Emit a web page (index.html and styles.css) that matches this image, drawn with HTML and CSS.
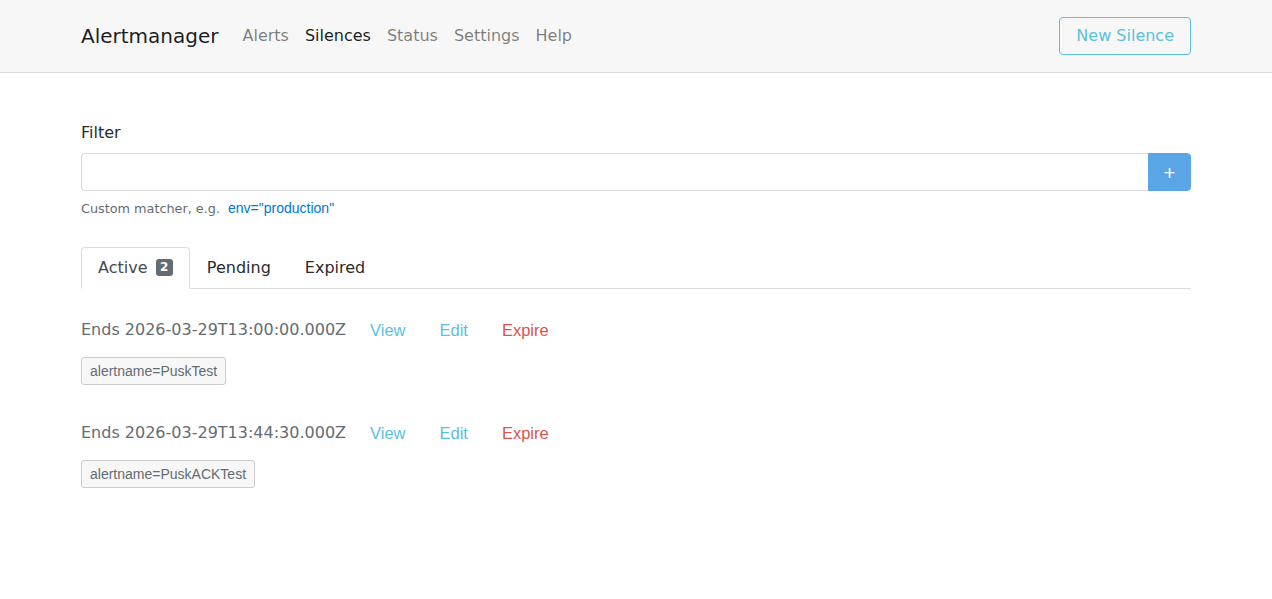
FILE: index.html
```html
<!DOCTYPE html>
<html>
<head>
  <title>Alertmanager</title>
  <link rel="stylesheet" href="styles.css">
</head>
<body>
  <nav class="navbar">
    <div class="container nav-inner">
      <a class="brand" href="#">Alertmanager</a>
      <ul class="nav-links">
        <li><a href="#">Alerts</a></li>
        <li><a href="#" class="active">Silences</a></li>
        <li><a href="#">Status</a></li>
        <li><a href="#">Settings</a></li>
        <li><a href="#">Help</a></li>
      </ul>
      <a class="btn-new" href="#">New Silence</a>
    </div>
  </nav>

  <div class="container main">
    <div class="filter">
      <label class="filter-label">Filter</label>
      <div class="input-group">
        <input class="filter-input" type="text">
        <button class="btn-add" disabled>+</button>
      </div>
      <small class="form-text">Custom matcher, e.g. <a class="example" href="#">env="production"</a></small>
    </div>

    <ul class="tabs">
      <li class="tab active">Active<span class="count">2</span></li>
      <li class="tab">Pending</li>
      <li class="tab">Expired</li>
    </ul>

    <div class="silence">
      <div class="silence-head">
        <span class="ends">Ends 2026-03-29T13:00:00.000Z</span>
        <a class="action info" href="#">View</a>
        <a class="action info" href="#">Edit</a>
        <a class="action danger" href="#">Expire</a>
      </div>
      <div class="matchers">
        <span class="matcher">alertname=PuskTest</span>
      </div>
    </div>

    <div class="silence">
      <div class="silence-head">
        <span class="ends">Ends 2026-03-29T13:44:30.000Z</span>
        <a class="action info" href="#">View</a>
        <a class="action info" href="#">Edit</a>
        <a class="action danger" href="#">Expire</a>
      </div>
      <div class="matchers">
        <span class="matcher">alertname=PuskACKTest</span>
      </div>
    </div>
  </div>
</body>
</html>
```

FILE: styles.css
```css
body {
  margin: 0;
  font-family: "DejaVu Sans", sans-serif;
  font-size: 16px;
  line-height: 1.5;
  color: #292b2c;
  background: #fff;
}

a {
  text-decoration: none;
}

.container {
  width: 1110px;
  margin: 0 auto;
}

.navbar {
  background-color: #f7f7f7;
  border-bottom: 1px solid #dcdcdc;
  padding: 17px 0;
}

.nav-inner {
  display: flex;
  align-items: center;
  height: 38px;
}

.brand {
  font-size: 20px;
  color: rgba(0, 0, 0, .9);
  margin-right: 16px;
}

.nav-links {
  display: flex;
  list-style: none;
  margin: 0;
  padding: 0;
  flex: 1;
}

.nav-links a {
  display: block;
  padding: 0 8px;
  color: rgba(0, 0, 0, .5);
}

.nav-links a.active {
  color: rgba(0, 0, 0, .9);
}

.btn-new {
  display: block;
  padding: 0 16px;
  line-height: 36px;
  border: 1px solid #5bc0de;
  border-radius: 4px;
  color: #5bc0de;
}

.main {
  padding-top: 48px;
}

.filter-label {
  display: block;
  margin-bottom: 8px;
}

.input-group {
  display: flex;
  height: 38px;
}

.filter-input {
  flex: 1;
  margin: 0;
  border: 1px solid rgba(0, 0, 0, .15);
  border-right: none;
  border-radius: 4px 0 0 4px;
  font-size: 16px;
}

.btn-add {
  width: 43px;
  margin: 0;
  border: 1px solid #5aa5e6;
  border-radius: 0 4px 4px 0;
  background-color: #5aa5e6;
  color: #fff;
  font-family: "DejaVu Sans", sans-serif;
  font-size: 16px;
}

.form-text {
  display: block;
  margin-top: 7px;
  font-size: 12.8px;
  line-height: 20px;
  color: #636c72;
}

.example {
  margin-left: 4px;
  font-family: "Liberation Sans", Arial, sans-serif;
  font-size: 14px;
  color: #0275d8;
}

.tabs {
  display: flex;
  list-style: none;
  margin: 28px 0 0;
  padding: 0;
  border-bottom: 1px solid #ddd;
}

.tab {
  padding: 8px 16px;
  margin-bottom: -1px;
  border: 1px solid transparent;
  border-radius: 4px 4px 0 0;
  color: #292b2c;
}

.tab.active {
  color: #464a4c;
  background: #fff;
  border-color: #ddd #ddd #fff;
}

.count {
  display: inline-block;
  margin-left: 8px;
  padding: 0 4.5px;
  font-size: 12px;
  font-weight: bold;
  line-height: 17px;
  vertical-align: 2px;
  color: #fff;
  background-color: #636c72;
  border-radius: 3px;
}

.silence {
  margin-top: 22px;
}

.silence + .silence {
  margin-top: 29px;
}

.silence-head {
  display: flex;
  align-items: center;
  height: 38px;
}

.ends {
  color: #636c72;
  margin-right: 7px;
}

.action {
  padding: 0 17px;
  font-family: "Liberation Sans", Arial, sans-serif;
  font-size: 16.5px;
}

.action.info {
  color: #5bc0de;
}

.action.danger {
  color: #d9534f;
}

.matchers {
  margin-top: 8px;
  line-height: 0;
}

.matcher {
  display: inline-block;
  padding: 4px 8px;
  font-family: "Liberation Sans", Arial, sans-serif;
  font-size: 14px;
  line-height: 18px;
  color: #636c72;
  background-color: #f7f7f7;
  border: 1px solid #ccc;
  border-radius: 3px;
}
```
